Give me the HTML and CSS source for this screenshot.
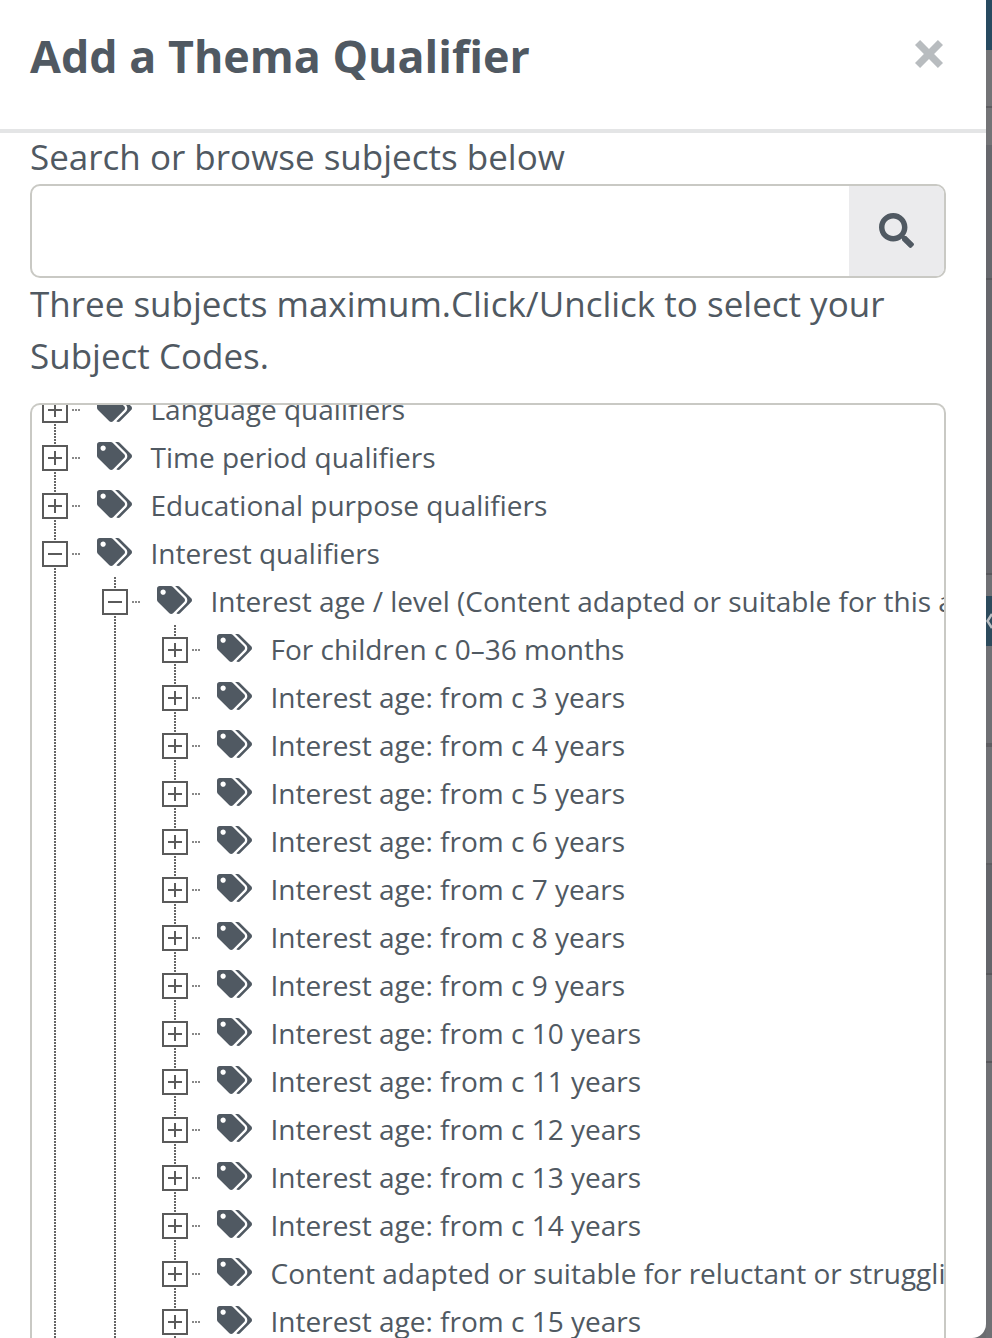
FILE: index.html
```html
<!DOCTYPE html>
<html lang="en">
<head>
  <meta charset="UTF-8" />
  <title>Add a Thema Qualifier</title>
  <link rel="stylesheet" href="styles.css">
</head>
<body>
  <div class="backdrop">
    <div class="backdrop-handle">
      <svg viewBox="0 0 6 20"><path d="M6 3 1.500 10 6 17"/></svg>
    </div>
  </div>

  <div class="modal">
    <div class="modal-header">
      <h1>Add a Thema Qualifier</h1>
      <svg class="close" viewBox="3 3 22 22"><path d="M3 7 7 3 14 10 21 3 25 7 18 14 25 21 21 25 14 18 7 25 3 21 10 14z"/></svg>
    </div>

    <div class="modal-body">
      <div class="hint first">Search or browse subjects below</div>
      <div class="search">
        <div class="search-input"></div>
        <div class="search-btn">
          <svg viewBox="0 0 512 512"><path d="M505 442.700L405.300 343c-4.500-4.500-10.600-7-17-7H372c27.600-35.300 44-79.700 44-128C416 93.100 322.900 0 208 0S0 93.100 0 208s93.100 208 208 208c48.300 0 92.700-16.400 128-44v16.300c0 6.400 2.500 12.500 7 17l99.700 99.700c9.400 9.400 24.600 9.400 33.900 0l28.300-28.300c9.400-9.400 9.400-24.600.1-34zM208 336c-70.700 0-128-57.200-128-128 0-70.700 57.200-128 128-128 70.700 0 128 57.200 128 128 0 70.700-57.200 128-128 128z"/></svg>
        </div>
      </div>
      <div class="hint">Three subjects maximum.Click/Unclick to select your Subject Codes.</div>

      <div class="tree">
        <div class="tree-inner">
          <svg width="0" height="0" class="defs">
            <symbol id="tags" viewBox="0 0 640 512">
              <path d="M497.941 225.941L286.059 14.059A48 48 0 0 0 252.118 0H48C21.490 0 0 21.490 0 48v204.118a48 48 0 0 0 14.059 33.941l211.882 211.882c18.744 18.745 49.136 18.746 67.882 0l204.118-204.118c18.745-18.745 18.745-49.137 0-67.882zM112 160c-26.510 0-48-21.490-48-48s21.490-48 48-48 48 21.490 48 48-21.490 48-48 48zm513.941 133.823L421.823 497.941c-18.745 18.745-49.137 18.745-67.882 0l-.36-.36L527.640 323.522c16.999-16.999 26.360-39.600 26.360-63.640s-9.362-46.641-26.360-63.640L331.397 0h48.721a48 48 0 0 1 33.941 14.059l211.882 211.882c18.745 18.745 18.745 49.137 0 67.882z"/>
            </symbol>
          </svg>

          <div class="node"><span class="box plus"></span><svg class="tag"><use href="#tags"/></svg><span class="label">Language qualifiers</span></div>
          <div class="node"><span class="box plus"></span><svg class="tag"><use href="#tags"/></svg><span class="label">Time period qualifiers</span></div>
          <div class="node"><span class="box plus"></span><svg class="tag"><use href="#tags"/></svg><span class="label">Educational purpose qualifiers</span></div>
          <div class="node"><span class="box minus"></span><svg class="tag"><use href="#tags"/></svg><span class="label">Interest qualifiers</span></div>

          <div class="children">
            <div class="node"><span class="box minus"></span><svg class="tag"><use href="#tags"/></svg><span class="label">Interest age / level (Content adapted or suitable for this age group)</span></div>
            <div class="children">
              <div class="node"><span class="box plus"></span><svg class="tag"><use href="#tags"/></svg><span class="label">For children c 0–36 months</span></div>
              <div class="node"><span class="box plus"></span><svg class="tag"><use href="#tags"/></svg><span class="label">Interest age: from c 3 years</span></div>
              <div class="node"><span class="box plus"></span><svg class="tag"><use href="#tags"/></svg><span class="label">Interest age: from c 4 years</span></div>
              <div class="node"><span class="box plus"></span><svg class="tag"><use href="#tags"/></svg><span class="label">Interest age: from c 5 years</span></div>
              <div class="node"><span class="box plus"></span><svg class="tag"><use href="#tags"/></svg><span class="label">Interest age: from c 6 years</span></div>
              <div class="node"><span class="box plus"></span><svg class="tag"><use href="#tags"/></svg><span class="label">Interest age: from c 7 years</span></div>
              <div class="node"><span class="box plus"></span><svg class="tag"><use href="#tags"/></svg><span class="label">Interest age: from c 8 years</span></div>
              <div class="node"><span class="box plus"></span><svg class="tag"><use href="#tags"/></svg><span class="label">Interest age: from c 9 years</span></div>
              <div class="node"><span class="box plus"></span><svg class="tag"><use href="#tags"/></svg><span class="label">Interest age: from c 10 years</span></div>
              <div class="node"><span class="box plus"></span><svg class="tag"><use href="#tags"/></svg><span class="label">Interest age: from c 11 years</span></div>
              <div class="node"><span class="box plus"></span><svg class="tag"><use href="#tags"/></svg><span class="label">Interest age: from c 12 years</span></div>
              <div class="node"><span class="box plus"></span><svg class="tag"><use href="#tags"/></svg><span class="label">Interest age: from c 13 years</span></div>
              <div class="node"><span class="box plus"></span><svg class="tag"><use href="#tags"/></svg><span class="label">Interest age: from c 14 years</span></div>
              <div class="node"><span class="box plus"></span><svg class="tag"><use href="#tags"/></svg><span class="label">Content adapted or suitable for reluctant or struggling readers</span></div>
              <div class="node"><span class="box plus"></span><svg class="tag"><use href="#tags"/></svg><span class="label">Interest age: from c 15 years</span></div>
            </div>
          </div>
        </div>
      </div>
    </div>
  </div>
</body>
</html>
```

FILE: styles.css
```css
body {
  margin: 0;
  height: 1338px;
  overflow: hidden;
  display: flex;
  flex-direction: row-reverse;
  font-family: 'Open Sans', sans-serif;
  color: #505962;
  background: #6b6c70;
}

/* dimmed page behind the dialog */
.backdrop {
  width: 6px;
  flex: none;
  position: relative;
  background: linear-gradient(to bottom,
    #274a60 0 50px,
    #737376 50px 106px, #5d5d61 106px 108px, #737376 108px 145px,
    #66676c 145px 278px, #58585c 278px 280px,
    #66676c 280px 573px, #58585c 573px 575px,
    #6f7074 575px 743px, #5d5d61 743px 747px,
    #6f7074 747px 863px, #5d5d61 863px 865px,
    #64656a 865px 973px, #58585c 973px 975px,
    #6f7074 975px 1061px, #58585c 1061px 1063px,
    #6f7074 1063px);
}

.backdrop-handle {
  position: absolute;
  top: 596px;
  left: 0;
  width: 6px;
  height: 50px;
  background: #2c4a5c;
  display: flex;
  align-items: center;
}

.backdrop-handle svg {
  width: 6px;
  height: 20px;
  fill: none;
  stroke: #b9bec2;
  stroke-width: 2.500;
}

.modal {
  flex: 1;
  min-width: 0;
  background: #fff;
  border-bottom-right-radius: 14px;
  display: flex;
  flex-direction: column;
}

.modal-header {
  height: 129px;
  flex: none;
  border-bottom: 4px solid #e4e5e6;
  padding: 0 43px 0 30px;
  display: flex;
  justify-content: space-between;
  align-items: flex-start;
}

.modal-header h1 {
  margin: 26px 0 0;
  font-size: 44.800px;
  line-height: 60px;
  font-weight: 700;
}

.close {
  width: 28px;
  height: 28px;
  margin-top: 40px;
  fill: #b8bcbf;
}

.modal-body {
  padding: 0 40px 0 30px;
  flex: 1;
  min-height: 0;
  display: flex;
  flex-direction: column;
}

.hint {
  font-size: 35px;
  line-height: 52px;
}

.hint.first {
  line-height: 48px;
  height: 51px;
}

.search {
  display: flex;
  height: 94px;
  border: 2px solid #c9c9c4;
  border-radius: 10px;
  overflow: hidden;
  box-sizing: border-box;
  flex: none;
}

.search-input {
  flex: 1;
}

.search-btn {
  width: 95px;
  background: #ebebed;
  display: flex;
  align-items: center;
  justify-content: center;
}

.search-btn svg {
  width: 35px;
  height: 35px;
  margin-top: -2px;
  fill: #505962;
}

.tree {
  flex: 1;
  min-height: 0;
  margin-top: 21px;
  border: 2px solid #c9c9c4;
  border-bottom: none;
  border-radius: 10px 10px 0 0;
  overflow: hidden;
  box-sizing: border-box;
}

.tree-inner {
  margin-top: -20px;
  padding-left: 10px;
  font-size: 28px;
  white-space: nowrap;
}

.defs {
  position: absolute;
}

.node {
  height: 48px;
  display: flex;
  align-items: center;
  position: relative;
}

/* dotted connectors, they sit under the boxes */
.node::before,
.children::before {
  content: "";
  position: absolute;
  left: 12px;
  top: 0;
  bottom: 0;
  width: 2px;
  background: repeating-linear-gradient(to bottom, #666 0 2px, transparent 2px 3px);
}

.children::before {
  left: -48px;
}

.node::after {
  content: "";
  position: absolute;
  left: 30px;
  top: 24px;
  width: 8px;
  height: 2px;
  background: repeating-linear-gradient(to right, #888 0 2px, transparent 2px 3px);
}

.children {
  margin-left: 60px;
  position: relative;
}

.box {
  width: 26px;
  height: 26px;
  box-sizing: border-box;
  border: 2px solid #5a5a5a;
  background: #fff;
  flex: none;
  position: relative;
  z-index: 1;
  margin-top: 2px;
  margin-right: 29px;
}

.box::before {
  content: "";
  position: absolute;
  left: 4px;
  right: 4px;
  top: 10px;
  height: 2px;
  background: #5a5a5a;
}

.box.plus::after {
  content: "";
  position: absolute;
  top: 4px;
  bottom: 4px;
  left: 10px;
  width: 2px;
  background: #5a5a5a;
}

.tag {
  width: 35px;
  height: 28px;
  flex: none;
  margin-right: 18.500px;
  margin-top: -2px;
  fill: #505962;
}

.label {
  line-height: 48px;
}
```
